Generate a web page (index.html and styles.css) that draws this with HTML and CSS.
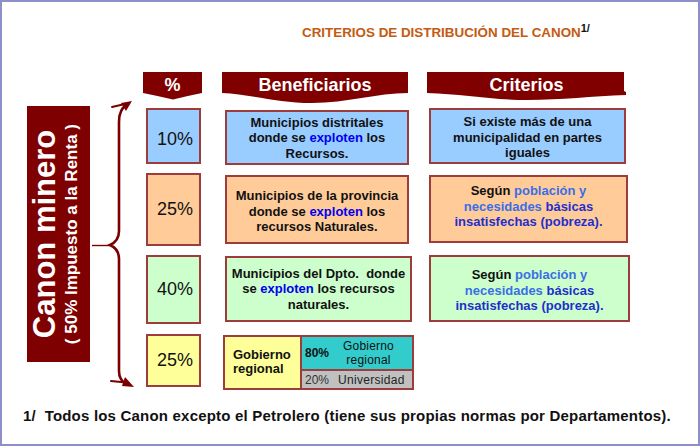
FILE: index.html
```html
<!DOCTYPE html>
<html lang="es">
<head>
<meta charset="utf-8">
<title>Criterios de distribución del canon</title>
<link rel="stylesheet" href="styles.css">
</head>
<body>
<div class="frame">
  <h1 class="title">CRITERIOS DE DISTRIBUCIÓN DEL CANON<sup class="sup">1/</sup></h1>
  <div class="main">
    <div class="canon">
      <div class="canon-text">
        <span class="canon-big">Canon minero</span>
        <span class="canon-sub">( 50% Impuesto a la Renta )</span>
      </div>
    </div>
    <svg class="brace" width="53" height="320" viewBox="90 72 53 320" aria-hidden="true">
      <path d="M127,105 Q119,109 119,122 L119,231 Q119,241 110,245 Q119,249 119,259 L119,371 Q119,380 126,384" fill="none" stroke="#7a0000" stroke-width="2.6" stroke-linecap="round"/>
      <path d="M92,245.5 H110" stroke="#7a0000" stroke-width="1.4"/>
      <path d="M112,107 L125,104" stroke="#7a0000" stroke-width="2" stroke-linecap="round"/>
      <polygon points="132,101 121,103 126,111" fill="#7a0000"/>
      <path d="M111,381 L126,382.5" stroke="#7a0000" stroke-width="2" stroke-linecap="round"/>
      <polygon points="134,387 125,377 122,386" fill="#7a0000"/>
    </svg>
    <div class="grid">
      <div class="head head-pct">
        <svg class="head-bg" viewBox="0 0 59 31" preserveAspectRatio="none" aria-hidden="true"><path d="M0,0 H59 V21 Q44,24 30,27.5 Q15,24 0,21 Z" fill="#800000"/></svg>
        <span class="head-text">%</span>
      </div>
      <div class="head head-ben">
        <svg class="head-bg" viewBox="0 0 186 31" preserveAspectRatio="none" aria-hidden="true"><path d="M0,0 H186 V21 C155,21 125,31 90,31 C55,31 28,22 0,21 Z" fill="#800000"/></svg>
        <span class="head-text">Beneficiarios</span>
      </div>
      <div class="head head-cri">
        <svg class="head-bg" viewBox="0 0 199 31" preserveAspectRatio="none" aria-hidden="true"><path d="M0,0 H197 V19 L199,20 V23 C165,24 135,28 100,28 C65,28 35,22 0,21 Z" fill="#800000"/></svg>
        <span class="head-text">Criterios</span>
      </div>

      <div class="pct blue pct-first">10%</div>
      <div class="box ben blue r1"><div class="txt">Municipios distritales<br>donde se <span class="hl">exploten</span> los<br>Recursos.</div></div>
      <div class="box cri blue r1c"><div class="txt">Si existe más de una<br>municipalidad en partes<br>iguales</div></div>

      <div class="pct orange">25%</div>
      <div class="box ben orange r2"><div class="txt">Municipios de la provincia<br>donde se <span class="hl">exploten</span> los<br>recursos Naturales.</div></div>
      <div class="box cri orange r2c"><div class="txt">Según <span class="lb">población y</span><br><span class="lb">necesidades</span> <span class="db">básicas</span><br><span class="db">insatisfechas (pobreza).</span></div></div>

      <div class="pct green">40%</div>
      <div class="box ben green r3"><div class="txt">Municipios del Dpto.&nbsp; donde<br>se <span class="hl">exploten</span> los recursos<br>naturales.</div></div>
      <div class="box cri green r3c"><div class="txt">Según <span class="lb">población y</span><br><span class="lb">necesidades</span> <span class="db">básicas</span><br><span class="db">insatisfechas (pobreza).</span></div></div>

      <div class="pct yellow r4p">25%</div>
      <div class="dist">
        <div class="dist-gob">Gobierno<br>regional</div>
        <div class="dist-reg"><span class="dist-num">80%</span><span class="dist-lab">Gobierno<br>regional</span></div>
        <div class="dist-uni"><span class="dist-num2">20%</span><span class="dist-lab2">Universidad</span></div>
      </div>
      <div class="empty"></div>
    </div>
  </div>
  <p class="note">1/&nbsp; Todos los Canon excepto el Petrolero (tiene sus propias normas por Departamentos).</p>
</div>
</body>
</html>
```
FILE: styles.css
```css
html, body {
  margin: 0;
  padding: 0;
  background: #ffffff;
}

body {
  font-family: "Liberation Sans", Arial, sans-serif;
  color: #111111;
}

.frame {
  width: 700px;
  height: 446px;
  box-sizing: border-box;
  border: 2px solid #8e8ec8;
  background: #ffffff;
  overflow: hidden;
}

.title {
  margin: 23px 0 0 300px;
  font-size: 13.4px;
  line-height: 16px;
  font-weight: bold;
  color: #c55a11;
  white-space: nowrap;
}

.sup {
  font-size: 11px;
  font-weight: bold;
  color: #111111;
  vertical-align: 5px;
  line-height: 0;
}

.main {
  display: flex;
  align-items: flex-start;
  margin: 31px 0 0 25px;
  height: 320px;
}

.canon {
  width: 63px;
  height: 256px;
  margin-top: 34px;
  background: #7f0000;
  display: flex;
  align-items: center;
  justify-content: flex-start;
  padding-left: 1px;
  box-sizing: border-box;
}

.canon-text {
  writing-mode: vertical-rl;
  transform: rotate(180deg);
  text-align: center;
  color: #ffffff;
  font-weight: bold;
  white-space: nowrap;
}

.canon-big {
  display: block;
  font-size: 31px;
  line-height: 34px;
}

.canon-sub {
  display: block;
  font-size: 17px;
  line-height: 20px;
}

.brace {
  display: block;
  flex: none;
}

.grid {
  display: grid;
  grid-template-columns: 79px 205px 203px;
  grid-template-rows: 27px 56px 73px 69px 56px;
  row-gap: 9px;
}

.head {
  position: relative;
  height: 27px;
  justify-self: start;
  text-align: center;
}

.head-pct { width: 59px; }
.head-ben { width: 186px; }
.head-cri { width: 199px; }

.head-bg {
  position: absolute;
  left: 0;
  top: 0;
  width: 100%;
  height: 31px;
  display: block;
}

.head-text {
  position: relative;
  display: block;
  color: #ffffff;
  font-weight: bold;
  font-size: 18px;
  line-height: 27px;
}

.blue { background: #99ccff; }
.orange { background: #ffcc99; }
.green { background: #ccffcc; }
.yellow { background: #ffff99; }

.pct {
  box-sizing: border-box;
  width: 55px;
  margin-left: 3px;
  border: 2px solid #9e3b3b;
  display: flex;
  align-items: center;
  justify-content: center;
  padding-left: 3px;
  font-size: 18px;
  color: #111111;
}

.pct-first {
  padding-top: 6px;
}

.r4p {
  margin-top: 1px;
  margin-bottom: 2px;
}

.box {
  box-sizing: border-box;
  border: 2px solid #9e3b3b;
  display: flex;
  align-items: center;
  justify-content: center;
  text-align: center;
  font-weight: bold;
  font-size: 13px;
  line-height: 15.5px;
  color: #111111;
}

.txt {
  white-space: nowrap;
}

.ben {
  width: 184px;
  margin-left: 3px;
}

.cri {
  width: 197px;
  margin-left: 2px;
}

.r1 {
  margin-top: 2px;
  margin-bottom: -1px;
  padding-top: 1px;
}

.r1c {
  padding-top: 3px;
}

.r2 {
  margin-top: 2px;
  margin-bottom: 2px;
  padding-top: 4px;
}

.r2c {
  width: 199px;
  margin-top: 2px;
  margin-bottom: 3px;
  padding-bottom: 5px;
}

.r3 {
  width: 187px;
  margin-top: 1px;
  margin-bottom: 2px;
}

.r3c {
  width: 201px;
  margin-bottom: 2px;
  padding-top: 4px;
}

.hl { color: #0000ee; }
.lb { color: #3a6ee6; }
.db { color: #1f2fcc; }

.dist {
  box-sizing: border-box;
  width: 191px;
  margin-left: 1px;
  margin-top: 2px;
  margin-bottom: -1px;
  border: 2px solid #9e3b3b;
  display: grid;
  grid-template-columns: 77px 1fr;
  grid-template-rows: 34px 1fr;
}

.dist-gob {
  grid-row: 1 / 3;
  background: #ffff99;
  border-right: 2px solid #9e3b3b;
  font-weight: bold;
  font-size: 13px;
  line-height: 14px;
  padding: 11px 0 0 8px;
  color: #111111;
}

.dist-reg {
  background: #33cccc;
  border-bottom: 2px solid #9e3b3b;
  display: flex;
  align-items: center;
  padding-left: 3px;
}

.dist-num {
  font-weight: bold;
  font-size: 12px;
  color: #111111;
}

.dist-lab {
  flex: 1;
  text-align: center;
  font-size: 12px;
  line-height: 14px;
  color: #111111;
  letter-spacing: 0.2px;
  padding-right: 4px;
}

.dist-uni {
  background: #c0c0c0;
  display: flex;
  align-items: center;
  padding-left: 3px;
  font-size: 12px;
  color: #222222;
}

.dist-num2 {
  width: 33px;
  color: #333333;
}

.dist-lab2 {
  letter-spacing: 0.3px;
}

.note {
  margin: 15px 0 0 21px;
  font-size: 15px;
  line-height: 18px;
  font-weight: bold;
  letter-spacing: 0.2px;
  color: #111111;
  white-space: nowrap;
}
```
